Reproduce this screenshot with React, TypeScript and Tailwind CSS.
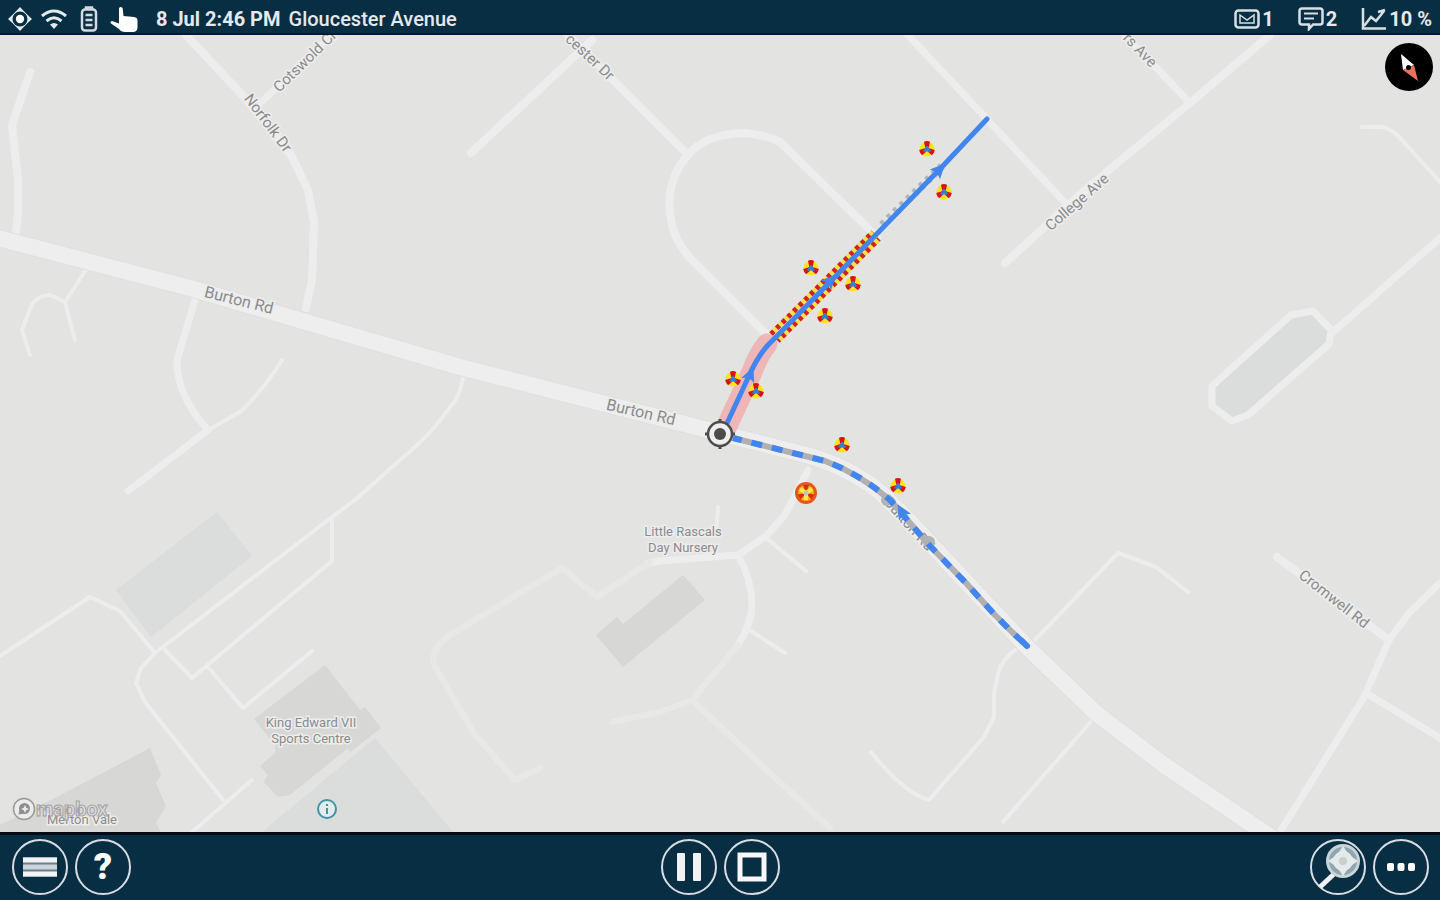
import type { ReactNode } from 'react';

type Road = { d: string; w: number; c?: string };

const ROAD = '#ededed';
const FAINT = '#e8e9e7';

const roads: Road[] = [
  { d: 'M30 72L12 125L18 180V215L15 240', w: 8 },
  { d: 'M186 35L247 100L291 155L308 190L314 222L312 280L306 308', w: 8 },
  { d: 'M255 108L332 35', w: 7 },
  { d: 'M87 268L65 302L70 322L75 340M65 302L50 295Q38 296 32 304L22 330L30 355', w: 4 },
  { d: 'M195 300L177 360Q176 395 208 430L128 491', w: 7 },
  { d: 'M208 430L240 412Q262 392 282 360', w: 4 },
  { d: 'M464 372Q460 398 450 407Q432 434 400 460L355 500L332 517L155 653L141 668L136 683L145 702L223 800', w: 4 },
  { d: 'M0 656L90 597L120 611L155 653', w: 4 },
  { d: 'M332 517V561L192 678L165 650', w: 4 },
  { d: 'M208 667L243 708L312 651', w: 4 },
  { d: 'M192 832L252 780', w: 4 },
  { d: 'M592 40L471 153', w: 8 },
  { d: 'M568 35L688 155', w: 8 },
  { d: 'M877 237L780 142Q770 136 745 133Q705 134 688 155Q664 182 671 220Q674 240 690 258L770 338', w: 8 },
  { d: 'M908 35L1070 208', w: 7 },
  { d: 'M1005 263L1085 190L1190 103L1270 35', w: 8 },
  { d: 'M1125 35L1190 103', w: 7 },
  { d: 'M1362 127H1382Q1394 130 1402 140L1440 182', w: 4 },
  { d: 'M1440 238L1332 333', w: 7 },
  { d: 'M1277 557L1389 640', w: 8 },
  { d: 'M1440 583L1409 613L1389 640L1364 697L1280 832', w: 7 },
  { d: 'M1366 693L1440 738', w: 7 },
  { d: 'M1033 642L1118 553L1156 567L1188 592', w: 4 },
  { d: 'M1018 648Q1002 658 998 674L994 693V717L984 737L929 800Q905 794 871 752', w: 4 },
  { d: 'M1095 717L1003 822', w: 4 },
  { d: 'M808 470L785 515L765 537L738 555L660 561L648 563', w: 7 },
  { d: 'M738 555Q752 580 752 605Q751 625 738 645', w: 7 },
  { d: 'M765 537L806 571M751 631L785 653M718 507L716 535', w: 4 },
  { d: 'M738 645L692 700L660 712L612 722M650 562L597 597L562 568L450 635Q430 650 434 665L475 735L515 780L540 768M692 700L745 750L830 828', w: 6, c: FAINT },
];

const mainRoad =
  'M-10 236L190 288L460 367L720 433L810 456Q850 468 880 492L910 522L1027 647L1097 714L1164 765L1275 840';

const approach = 'M733 438L825 461Q860 474 890 500L930 546L966 583L994 614L1012 632L1028 647';

const hazards: [number, number][] = [
  [927, 149], [944, 192], [811, 268], [853, 284], [825, 316], [733, 379], [756, 391], [842, 445], [898, 486],
];

type Label = { t: string; x: number; y: number; r?: number; s?: number };
const labels: Label[] = [
  { t: 'Burton Rd', x: 239, y: 300, r: 14, s: 16 },
  { t: 'Burton Rd', x: 641, y: 412, r: 13, s: 16 },
  { t: 'Norfolk Dr', x: 268, y: 123, r: 53 },
  { t: 'Cotswold Cr', x: 305, y: 61, r: -44 },
  { t: 'cester Dr', x: 590, y: 57, r: 43 },
  { t: 'College Ave', x: 1077, y: 202, r: -41 },
  { t: 'rs Ave', x: 1140, y: 50, r: 46 },
  { t: 'Cromwell Rd', x: 1334, y: 599, r: 38 },
  { t: 'Little Rascals', x: 683, y: 531, s: 13 },
  { t: 'Day Nursery', x: 683, y: 547, s: 13 },
  { t: 'King Edward VII', x: 311, y: 722, s: 13 },
  { t: 'Sports Centre', x: 311, y: 738, s: 13 },
  { t: 'Merton Vale', x: 82, y: 819, s: 13 },
];

function Hazard({ x, y }: { x: number; y: number }) {
  return (
    <g transform={`translate(${x} ${y})`}>
      <circle r="7.5" fill="#f9e51e" />
      <path d="M-3 -7.3A7.8 7.8 0 0 1 3 -7.3L1.8 -1.5H-1.8Z" fill="#d8121d" />
      <path d="M-3 -7.3A7.8 7.8 0 0 1 3 -7.3L1.8 -1.5H-1.8Z" fill="#d8121d" transform="rotate(120)" />
      <path d="M-3 -7.3A7.8 7.8 0 0 1 3 -7.3L1.8 -1.5H-1.8Z" fill="#d8121d" transform="rotate(240)" />
      <path d="M0 -3L1.5 -1L3.5 2L1 2.500L0 1.500L-1 2.500L-3.500 2L-1.500 -1Z" fill="#2f7fd6" stroke="#2f7fd6" />
    </g>
  );
}

function Arrow({ x, y, r }: { x: number; y: number; r: number }) {
  return <path d="M0 -9L7 6L0 3L-7 6Z" fill="#4285ee" transform={`translate(${x} ${y}) rotate(${r})`} />;
}

function MapCanvas() {
  return (
    <svg
      className="block h-full w-full font-['Roboto',sans-serif]"
      viewBox="0 35 1440 797"
      preserveAspectRatio="xMidYMid slice"
      role="img"
      aria-label="Street map with planned route"
    >
      <g fill="#dadddb">
        <path d="M217 512L252 556L151 637L116 590Z" />
        <path d="M375 738L453 832H262Z" />
        <path d="M1293 318L1312 312L1328 330L1326 343L1246 413L1232 418L1214 405V387Z" />
      </g>
      <g fill="#d7d7d6">
        <path d="M325 665L360 710L365 707L381 728L350 752L348 748L290 795L278 797L264 782L268 775L260 766L275 753V745L254 719Z" />
        <path d="M0 832V825L55 798L150 748L161 775L156 783L166 806L156 823L161 832Z" />
        <path d="M683 575L705 600L623 667L596 635L617 617L623 624Z" />
      </g>
      <g fill="none" strokeLinecap="round" strokeLinejoin="round">
        {roads.map((r) => (
          <path key={r.d} d={r.d} stroke={r.c ?? ROAD} strokeWidth={r.w} />
        ))}
        <path d="M1291 315L1313 311L1331 330L1329 344L1248 415L1232 421L1212 406V386Z" stroke={ROAD} strokeWidth="7" />
        <path d={mainRoad} stroke="#dfe0df" strokeWidth="18" />
        <path d={mainRoad} stroke="#eeeeee" strokeWidth="16" />
      </g>
      <g fill="#8b8b8b" stroke="#ededed" strokeWidth="3" paintOrder="stroke" textAnchor="middle" dominantBaseline="central">
        {labels.map((l) => (
          <text key={`${l.t}${l.x}`} fontSize={l.s ?? 15} transform={`translate(${l.x} ${l.y}) rotate(${l.r ?? 0})`}>
            {l.t}
          </text>
        ))}
        <text fontSize="15" transform="translate(909 524) rotate(48)">Burton Rd</text>
      </g>

      <path d="M726 428L752 372Q758 355 767 344" fill="none" stroke="#f0aeae" strokeWidth="21" strokeLinecap="round" opacity="0.85" />

      <g fill="none" strokeWidth="5">
        <path d="M771 334L873 232" stroke="#f6e04a" />
        <path d="M778 341L879 239" stroke="#f6e04a" />
        <path d="M771 334L873 232" stroke="#d32020" strokeDasharray="4 4" />
        <path d="M778 341L879 239" stroke="#d32020" strokeDasharray="4 4" strokeDashoffset="2" />
        <path d="M882 225L942 166" stroke="#adb4bd" strokeWidth="8" strokeDasharray="4 5" />
      </g>
      <g fill="#b3b3b3">
        <circle cx="887" cy="500" r="6" />
        <circle cx="929" cy="542" r="6" />
      </g>
      <g fill="none" strokeWidth="5" strokeLinejoin="round">
        <path d="M722 434L748 378Q757 357 768 345L830 282L939 170L987 119" stroke="#4285ee" strokeLinecap="round" />
        <path d={approach} stroke="#b0b0b0" strokeWidth="6" />
        <path d={approach} stroke="#4285ee" strokeWidth="6" strokeDasharray="11 10" strokeDashoffset="2" />
        <path d="M1022 641L1027 646" stroke="#4285ee" strokeWidth="6" strokeLinecap="round" />
      </g>
      <Arrow x={939} y={170} r={43} />
      <Arrow x={830} y={281} r={43} />
      <Arrow x={750} y={375} r={22} />
      <Arrow x={902} y={512} r={-30} />

      {hazards.map(([x, y]) => (
        <Hazard key={`${x}-${y}`} x={x} y={y} />
      ))}

      <g transform="translate(806 493)">
        <circle r="11" fill="#e8541c" />
        <circle r="8" fill="#f2b418" />
        <path d="M-3 -8H3L1 -2H-1Z" fill="#dd2c12" />
        <path d="M-3 -8H3L1 -2H-1Z" fill="#dd2c12" transform="rotate(120)" />
        <path d="M-3 -8H3L1 -2H-1Z" fill="#dd2c12" transform="rotate(240)" />
        <path d="M-6 -4L0 0L6 -4M0 0V7" stroke="#fae94a" strokeWidth="4" fill="none" />
        <circle r="2.5" fill="#c9c3b4" />
      </g>

      <g transform="translate(720 434)" stroke="#4c4c4c" fill="none">
        <circle r="12" fill="#f0eeee" strokeWidth="2.5" />
        <path d="M0 -15V-11M0 15V11M-15 0H-11M15 0H11" strokeWidth="3" />
        <circle r="6" fill="#4c4c4c" stroke="none" />
      </g>
    </svg>
  );
}

function RoundButton({ label, children }: { label: string; children: ReactNode }) {
  return (
    <button
      type="button"
      aria-label={label}
      className="flex size-14 items-center justify-center rounded-full border-2 border-[#d9dde3] text-white"
    >
      {children}
    </button>
  );
}

function StatusBar() {
  return (
    <header className="flex h-[35px] shrink-0 items-center justify-between border-b-2 border-[#04183a] bg-[#072e42] px-2 pt-1 text-xl leading-none text-[#e4e9ec]">
      <div className="flex items-center gap-2">
        <svg className="size-6" viewBox="0 0 24 24" aria-hidden="true">
          <path d="M12 0L15.5 3.8L20.200 8.500L24 12L20.200 15.500L15.500 20.200L12 24L8.500 20.200L3.800 15.500L0 12L3.800 8.500L8.500 3.800Z" fill="#e4e9ec" />
          <circle cx="12" cy="12" r="7.500" fill="#072e42" />
          <circle cx="12" cy="12" r="4.200" fill="#fff" />
        </svg>
        <svg className="h-5 w-7" viewBox="0 0 28 20" fill="none" stroke="#e4e9ec" strokeWidth="3" aria-hidden="true">
          <path d="M2 7Q14 -3 26 7M6.500 12Q14 5.500 21.500 12" />
          <path d="M10 15.500Q14 12.500 18 15.500L14 20Z" fill="#e4e9ec" stroke="none" />
        </svg>
        <svg className="mx-1 h-[26px] w-[18px]" viewBox="0 0 18 26" fill="none" stroke="#d5dce1" strokeWidth="2.500" aria-hidden="true">
          <path d="M6 3V1.500H12V3" />
          <rect x="2" y="3.500" width="14" height="21" rx="3" />
          <path d="M5.500 9H12.500M5.500 14H12.500M5.500 19H12.500" strokeWidth="2.500" />
        </svg>
        <svg className="h-[26px] w-7" viewBox="0 0 28 26" fill="#fff" aria-hidden="true">
          <path d="M9 2.500Q9 1 10.800 1Q12.500 1 12.700 2.500L13.500 10L24 11Q27.500 11.500 27.500 14V22Q27 26 23 26H15Q11 26 9 23L1 17.500Q-0.500 15.500 2 15L9 17.500Z" />
        </svg>
        <p className="ml-2.5 flex gap-2">
          <time className="font-bold">8 Jul 2:46 PM</time>
          <span className="font-medium">Gloucester Avenue</span>
        </p>
      </div>
      <ul className="flex items-center gap-6 font-bold">
        <li className="flex items-center gap-0.5">
          <svg className="h-5 w-[26px]" viewBox="0 0 26 20" fill="none" stroke="#d9e0e4" strokeWidth="2.500" aria-hidden="true">
            <rect x="1.500" y="1.500" width="23" height="17" rx="3" />
            <path d="M6 6L13 11L20 6V14H6Z" strokeWidth="1.500" />
          </svg>
          <span>1</span>
        </li>
        <li className="flex items-center gap-0.5">
          <svg className="h-6 w-[26px]" viewBox="0 0 26 24" fill="none" stroke="#d9e0e4" strokeWidth="2.500" aria-hidden="true">
            <path d="M4 1.500H22Q24.500 1.500 24.500 4V15Q24.500 17.500 22 17.500H15L11 22V17.500H4Q1.500 17.500 1.500 15V4Q1.500 1.500 4 1.500Z" />
            <path d="M6 6.500H20M6 11.500H16" strokeWidth="2" />
          </svg>
          <span>2</span>
        </li>
        <li className="flex items-center gap-0.5">
          <svg className="h-[22px] w-[26px]" viewBox="0 0 26 22" fill="none" stroke="#d9e0e4" strokeWidth="2.500" aria-hidden="true">
            <path d="M2 0V20.500H25" />
            <path d="M3 18L10 9L15 13L23 3M17 4L24 2" />
          </svg>
          <span>10 %</span>
        </li>
      </ul>
    </header>
  );
}

export default function App() {
  return (
    <div className="flex h-screen flex-col bg-[#072e42] font-['Roboto',sans-serif]">
      <StatusBar />

      <main className="relative min-h-0 flex-1 overflow-hidden bg-[#e3e4e2]">
        <MapCanvas />
        <button type="button" aria-label="Compass" className="absolute top-2 right-[7px] size-12 rounded-full bg-black">
          <svg className="size-12" viewBox="0 0 48 48" aria-hidden="true">
            <path d="M16 11L29 22L18 27Z" fill="#fff" />
            <path d="M18 27L29 22L33 38Z" fill="#e8735a" />
            <circle cx="23.500" cy="24.500" r="2.500" fill="#000" />
          </svg>
        </button>
        <div className="absolute bottom-[11px] left-3 flex w-[326px] items-center justify-between">
          <a href="#mapbox" className="flex items-center text-xl leading-5 font-bold">
            <svg className="size-6" viewBox="0 0 24 24" aria-hidden="true">
              <circle cx="12" cy="12" r="10.500" fill="#ececec" stroke="#9a9a9a" strokeWidth="1.500" />
              <circle cx="12.500" cy="11.500" r="5.500" fill="#8f8f8f" />
              <path d="M6.500 17.500L8 11L13 16.500Z" fill="#8f8f8f" />
              <path d="M13 8L14.200 10.800L17 12L14.200 13.200L13 16L11.800 13.200L9 12L11.800 10.800Z" fill="#ececec" />
            </svg>
            <span className="text-[#dcdcdc] [-webkit-text-stroke:1px_#a3a3a3]">mapbox</span>
          </a>
          <button type="button" aria-label="Map information" className="size-[22px]">
            <svg viewBox="0 0 22 22" fill="none" stroke="#3f94a6" strokeWidth="2" aria-hidden="true">
              <circle cx="11" cy="11" r="9" fill="#e3ecec" />
              <path d="M11 10V16M11 6V8" />
            </svg>
          </button>
        </div>
      </main>

      <footer className="grid h-[68px] shrink-0 grid-cols-3 items-center border-t-[3px] border-[#020b16] bg-[#072e42] pr-[11px] pb-0.5 pl-3">
        <div className="flex gap-[7px]">
          <RoundButton label="Menu">
            <svg className="h-5 w-[34px]" viewBox="0 0 34 20" aria-hidden="true">
              <rect width="34" height="20" fill="#6b7f8d" />
              <path d="M0 3H34M0 17H34" stroke="#f4f4f4" strokeWidth="5" />
              <path d="M0 10H34" stroke="#cdd4da" strokeWidth="5" />
            </svg>
          </RoundButton>
          <RoundButton label="Help">
            <span className="text-4xl leading-none font-black">?</span>
          </RoundButton>
        </div>
        <div className="flex justify-center gap-[7px]">
          <RoundButton label="Pause">
            <svg className="h-7 w-[26px]" viewBox="0 0 26 28" fill="#f2f2f4" aria-hidden="true">
              <rect x="1" width="8" height="28" rx="1" />
              <rect x="17" width="8" height="28" rx="1" />
            </svg>
          </RoundButton>
          <RoundButton label="Stop">
            <svg className="size-[30px]" viewBox="0 0 30 30" fill="none" aria-hidden="true">
              <rect x="3" y="3" width="24" height="24" stroke="#f7f7f9" strokeWidth="5" />
            </svg>
          </RoundButton>
        </div>
        <div className="flex justify-end gap-[7px]">
          <RoundButton label="Find location">
            <svg className="size-[52px] shrink-0" viewBox="0 0 52 52" fill="none" aria-hidden="true">
              <path d="M8 46L22 33" stroke="#eef1f3" strokeWidth="5" />
              <circle cx="31" cy="20" r="15.500" fill="#8fa5af" stroke="#c9d3d8" strokeWidth="3" />
              <path d="M31 5L37 14L46 20L37 26L31 35L25 26L16 20L25 14Z" fill="#e4e9ea" />
              <circle cx="31" cy="20" r="9" stroke="#e6ebec" strokeWidth="2" />
              <circle cx="31" cy="20" r="4" fill="#c8cfd0" />
            </svg>
          </RoundButton>
          <RoundButton label="More">
            <svg className="h-2 w-7" viewBox="0 0 28 8" fill="#fff" aria-hidden="true">
              <rect width="7" height="8" rx="2" />
              <rect x="10.500" width="7" height="8" rx="2" />
              <rect x="21" width="7" height="8" rx="2" />
            </svg>
          </RoundButton>
        </div>
      </footer>
    </div>
  );
}
